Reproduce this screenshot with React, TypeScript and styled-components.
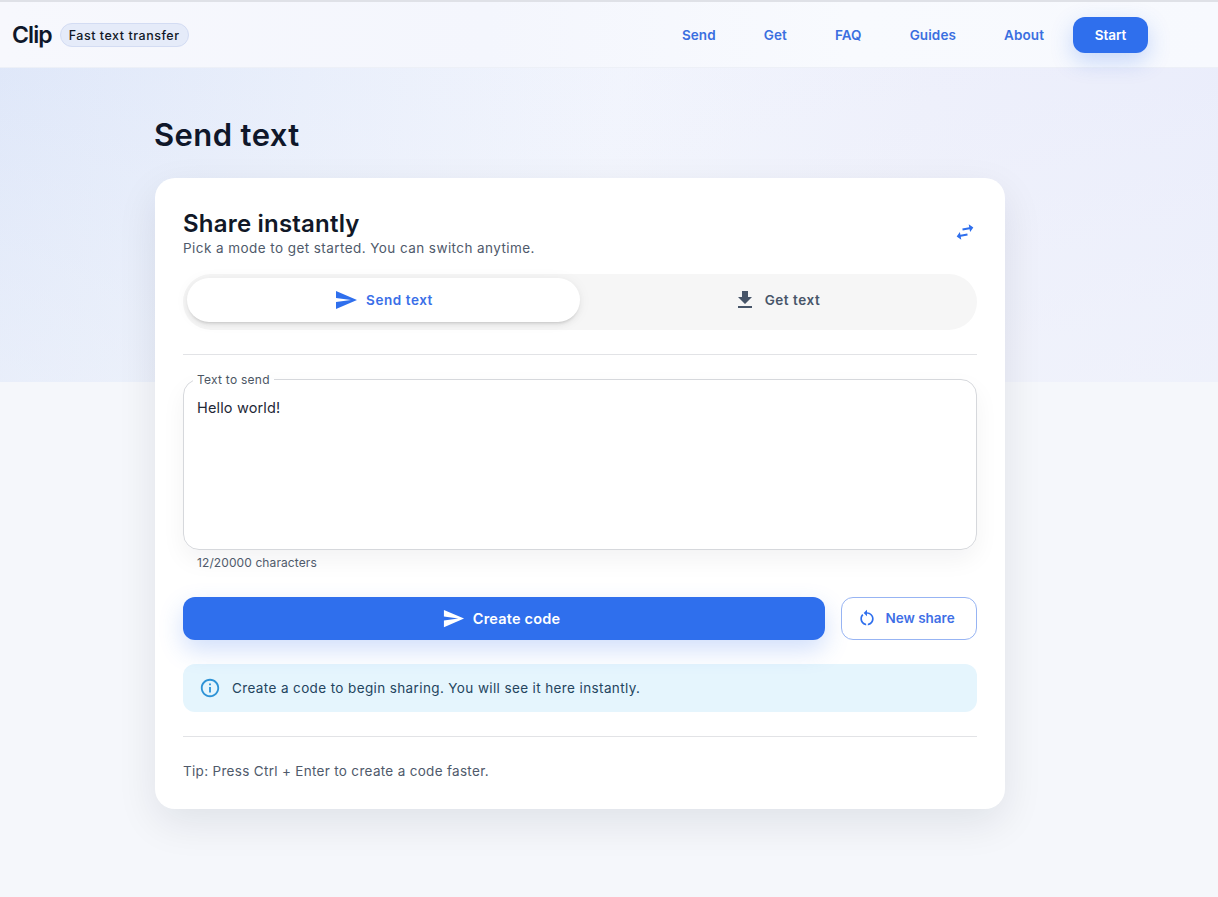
import React from "react";
import styled, { createGlobalStyle } from "styled-components";

const Global = createGlobalStyle`
  html, body { margin: 0; padding: 0; }
  body {
    min-height: 897px;
    overflow: hidden;
    font-family: Inter, "Liberation Sans", sans-serif;
    color: #111827;
    background:
      linear-gradient(to bottom, rgba(245, 247, 251, 0) 0%, rgba(245, 247, 251, 0.45) 100%) top / 100% 382px no-repeat,
      linear-gradient(95deg, #dde6f9 0%, #e8eefb 25%, #f1f4fd 50%, #edeffb 75%, #e9ecfb 100%) top / 100% 382px no-repeat,
      #f5f7fb;
  }
  * { box-sizing: border-box; }
`;

const Header = styled.header`
  height: 68px;
  display: flex;
  align-items: center;
  justify-content: space-between;
  padding: 1px 70px 0 12px;
  border-top: 2px solid #dfe1e7;
  border-bottom: 1px solid #edf0f7;
  background: linear-gradient(90deg, #f7f8fd 0%, #f4f6fd 40%, #f8fafe 70%, #f7f9fe 100%);
`;
const Brand = styled.div`
  display: flex;
  align-items: center;
  gap: 8px;
`;
const Logo = styled.div`
  font-size: 23px;
  font-weight: 600;
  letter-spacing: -0.9px;
  color: #0f172a;
`;
const Chip = styled.div`
  height: 24px;
  padding: 0 8px;
  display: flex;
  align-items: center;
  border-radius: 12px;
  font-size: 12.5px;
  font-weight: 500;
  letter-spacing: 0.52px;
  color: #111827;
  background: #e5ebf9;
  border: 1px solid #d3dcf3;
`;
const Nav = styled.nav`
  display: flex;
  align-items: center;
`;
const NavLink = styled.a<{ $gap: number }>`
  font-size: 13.5px;
  font-weight: 600;
  letter-spacing: 0.1px;
  color: #3a6fe0;
  margin-right: ${(p) => p.$gap}px;
`;
const StartButton = styled.button`
  width: 75px;
  height: 36px;
  border: 0;
  border-radius: 12px;
  background: #2f6fed;
  color: #fff;
  font: 600 13.5px Inter, "Liberation Sans", sans-serif;
  box-shadow: 0 8px 22px rgba(47, 111, 237, 0.25);
`;

const Main = styled.main`
  width: 850px;
  margin-left: 155px;
`;
const PageTitle = styled.h1`
  margin: 0 0 0 -1px;
  padding-top: 48px;
  height: 110px;
  font-size: 31px;
  line-height: 38px;
  font-weight: 600;
  letter-spacing: 0.4px;
  color: #0f172a;
`;
const Card = styled.section`
  height: 631px;
  padding: 28px;
  background: #fff;
  border-radius: 20px;
  box-shadow: 0 14px 40px rgba(15, 23, 42, 0.09);
`;
const CardHead = styled.div`
  display: flex;
  justify-content: space-between;
  align-items: flex-start;
  height: 68px;
  padding-top: 2px;
`;
const CardTitle = styled.h2`
  margin: 0;
  font-size: 24px;
  line-height: 31px;
  font-weight: 600;
  letter-spacing: 0.2px;
  color: #111827;
`;
const CardSub = styled.p`
  margin: 0;
  font-size: 13.5px;
  line-height: 18px;
  letter-spacing: 0.43px;
  color: #4f5a6b;
`;
const SwapIcon = styled.svg`
  width: 24px;
  height: 24px;
  margin-top: 12px;
  fill: #2f6fed;
  transform: rotate(-10deg);
`;
const Tabs = styled.div`
  height: 56px;
  padding: 4px;
  display: flex;
  border-radius: 28px;
  background: #f6f6f6;
`;
const Tab = styled.div<{ $active?: boolean }>`
  flex: 1;
  height: 44px;
  display: flex;
  align-items: center;
  justify-content: center;
  gap: 8px;
  border-radius: 22px;
  font-size: 13.5px;
  font-weight: 600;
  letter-spacing: 0.55px;
  color: ${(p) => (p.$active ? "#3a6fe8" : "#475569")};
  background: ${(p) => (p.$active ? "#fff" : "transparent")};
  box-shadow: ${(p) =>
    p.$active
      ? "0 3px 3px -2px rgba(0,0,0,.14), 0 3px 6px 0 rgba(0,0,0,.05), 0 1px 14px 0 rgba(0,0,0,.05)"
      : "none"};
`;
const TabIcon = styled.svg<{ $color: string }>`
  width: 24px;
  height: 24px;
  fill: ${(p) => p.$color};
`;
const Divider = styled.hr<{ $top: number }>`
  margin: ${(p) => p.$top}px 0 0;
  border: 0;
  border-top: 1px solid #e2e3e6;
`;
const FieldBox = styled.fieldset`
  margin: 16px 0 0;
  padding: 0 13px;
  height: 179px;
  border: 1px solid #d6d8dc;
  border-radius: 16px;
  background: #fff;
  box-shadow: 0 10px 24px rgba(15, 23, 42, 0.05);
`;
const FieldLegend = styled.legend`
  padding: 1px 4px 0;
  margin-left: -4px;
  font-size: 12px;
  line-height: 15px;
  color: #4b5563;
  letter-spacing: 0.25px;
`;
const FieldText = styled.div`
  padding-top: 10px;
  font-size: 14.5px;
  line-height: 22px;
  letter-spacing: 0.15px;
  color: #1f2937;
`;
const Helper = styled.div`
  margin: 5px 0 0 14px;
  font-size: 12px;
  line-height: 16px;
  color: #4f5a6b;
  letter-spacing: 0.1px;
`;
const Actions = styled.div`
  margin-top: 26px;
  display: flex;
  gap: 16px;
  height: 43px;
`;
const PrimaryButton = styled.button`
  flex: 1;
  display: flex;
  align-items: center;
  justify-content: center;
  gap: 8px;
  padding-right: 12px;
  border: 0;
  border-radius: 12px;
  background: #2f6fed;
  color: #fff;
  font: 600 14.5px Inter, "Liberation Sans", sans-serif;
  letter-spacing: 0.2px;
  box-shadow: 0 10px 24px rgba(47, 111, 237, 0.22);
`;
const ButtonIcon = styled.svg`
  width: 23px;
  height: 23px;
  fill: #fff;
`;
const SecondaryButton = styled.button`
  width: 136px;
  display: flex;
  align-items: center;
  justify-content: center;
  gap: 8px;
  padding: 0 6px 1px 0;
  background: #fff;
  border: 1px solid #97b4f3;
  border-radius: 12px;
  color: #3f6fe6;
  font: 600 13.5px Inter, "Liberation Sans", sans-serif;
`;
const ResetIcon = styled.svg`
  width: 20px;
  height: 20px;
  fill: #2f6fed;
`;
const Alert = styled.div`
  margin-top: 24px;
  height: 48px;
  padding: 0 16px;
  display: flex;
  align-items: center;
  gap: 11px;
  border-radius: 12px;
  background: #e5f5fd;
  font-size: 13.5px;
  letter-spacing: 0.38px;
  color: #24455f;
`;
const InfoIcon = styled.svg`
  width: 22px;
  height: 22px;
  fill: #2e93d6;
`;
const Tip = styled.p`
  margin: 25px 0 0;
  font-size: 13.5px;
  line-height: 18px;
  letter-spacing: 0.31px;
  color: #4f5a6b;
`;

export default function App() {
  return (
    <>
      <Global />
      <Header>
        <Brand>
          <Logo>Clip</Logo>
          <Chip>Fast text transfer</Chip>
        </Brand>
        <Nav>
          <NavLink $gap={48}>Send</NavLink>
          <NavLink $gap={48}>Get</NavLink>
          <NavLink $gap={48}>FAQ</NavLink>
          <NavLink $gap={48}>Guides</NavLink>
          <NavLink $gap={29}>About</NavLink>
          <StartButton>Start</StartButton>
        </Nav>
      </Header>
      <Main>
        <PageTitle>Send text</PageTitle>
        <Card>
          <CardHead>
            <div>
              <CardTitle>Share instantly</CardTitle>
              <CardSub>Pick a mode to get started. You can switch anytime.</CardSub>
            </div>
            <SwapIcon viewBox="0 0 24 24">
              <path d="M6.99 11 3 15l3.99 4v-3H14v-2H6.99v-3zM21 9l-3.99-4v3H10v2h7.01v3L21 9z" />
            </SwapIcon>
          </CardHead>
          <Tabs>
            <Tab $active>
              <TabIcon $color="#2f6fed" viewBox="0 0 24 24">
                <path d="M2.01 21 23 12 2.01 3 2 10l15 2-15 2z" />
              </TabIcon>
              Send text
            </Tab>
            <Tab>
              <TabIcon $color="#475569" viewBox="0 0 24 24">
                <path d="M5 20h14v-2H5v2zM19 9h-4V3H9v6H5l7 7 7-7z" />
              </TabIcon>
              Get text
            </Tab>
          </Tabs>
          <Divider $top={24} />
          <FieldBox>
            <FieldLegend>Text to send</FieldLegend>
            <FieldText>Hello world!</FieldText>
          </FieldBox>
          <Helper>12/20000 characters</Helper>
          <Actions>
            <PrimaryButton>
              <ButtonIcon viewBox="0 0 24 24">
                <path d="M2.01 21 23 12 2.01 3 2 10l15 2-15 2z" />
              </ButtonIcon>
              Create code
            </PrimaryButton>
            <SecondaryButton>
              <ResetIcon viewBox="0 0 24 24">
                <path d="M12 5V2L8 6l4 4V7c3.31 0 6 2.69 6 6 0 2.97-2.17 5.43-5 5.91v2.02c3.95-.49 7-3.85 7-7.93 0-4.42-3.58-8-8-8zm-6 8c0-1.65.67-3.15 1.76-4.24L6.34 7.34C4.9 8.79 4 10.79 4 13c0 4.08 3.05 7.44 7 7.93v-2.02c-2.83-.48-5-2.94-5-5.91z" />
              </ResetIcon>
              New share
            </SecondaryButton>
          </Actions>
          <Alert>
            <InfoIcon viewBox="0 0 24 24">
              <path d="M11 7h2v2h-2zm0 4h2v6h-2zm1-9C6.48 2 2 6.48 2 12s4.48 10 10 10 10-4.48 10-10S17.52 2 12 2zm0 18c-4.41 0-8-3.59-8-8s3.59-8 8-8 8 3.59 8 8-3.59 8-8 8z" />
            </InfoIcon>
            Create a code to begin sharing. You will see it here instantly.
          </Alert>
          <Divider $top={24} />
          <Tip>Tip: Press Ctrl + Enter to create a code faster.</Tip>
        </Card>
      </Main>
    </>
  );
}
